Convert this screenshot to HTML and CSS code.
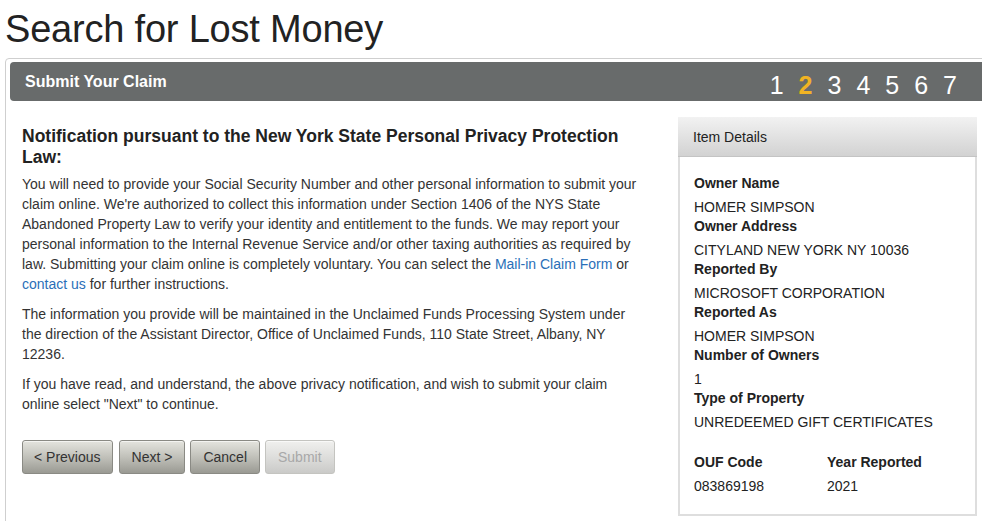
FILE: index.html
```html
<!DOCTYPE html>
<html>
<head>
<meta charset="utf-8">
<title>Search for Lost Money</title>
<link rel="stylesheet" href="styles.css">
</head>
<body>
<h1 class="page-title">Search for Lost Money</h1>
<div class="wizard">
  <div class="wizard-bar">
    <span class="wizard-title">Submit Your Claim</span>
    <ol class="steps">
      <li>1</li>
      <li class="current">2</li>
      <li>3</li>
      <li>4</li>
      <li>5</li>
      <li>6</li>
      <li>7</li>
    </ol>
  </div>
  <div class="wizard-body">
    <div class="main-col">
      <h2 class="notice-title">Notification pursuant to the New York State Personal Privacy Protection Law:</h2>
      <p>You will need to provide your Social Security Number and other personal information to submit your claim online. We're authorized to collect this information under Section 1406 of the NYS State Abandoned Property Law to verify your identity and entitlement to the funds. We may report your personal information to the Internal Revenue Service and/or other taxing authorities as required by law. Submitting your claim online is completely voluntary. You can select the <a href="#">Mail-in Claim Form</a> or <a href="#">contact us</a> for further instructions.</p>
      <p>The information you provide will be maintained in the Unclaimed Funds Processing System under the direction of the Assistant Director, Office of Unclaimed Funds, 110 State Street, Albany, NY 12236.</p>
      <p>If you have read, and understand, the above privacy notification, and wish to submit your claim online select "Next" to continue.</p>
      <div class="actions">
        <button class="btn btn-wide">&lt; Previous</button>
        <button class="btn">Next &gt;</button>
        <button class="btn">Cancel</button>
        <button class="btn" disabled>Submit</button>
      </div>
    </div>
    <aside class="details">
      <div class="details-head">Item Details</div>
      <div class="details-body">
        <dl class="field"><dt>Owner Name</dt><dd>HOMER SIMPSON</dd></dl>
        <dl class="field"><dt>Owner Address</dt><dd>CITYLAND NEW YORK NY 10036</dd></dl>
        <dl class="field"><dt>Reported By</dt><dd>MICROSOFT CORPORATION</dd></dl>
        <dl class="field"><dt>Reported As</dt><dd>HOMER SIMPSON</dd></dl>
        <dl class="field"><dt>Number of Owners</dt><dd>1</dd></dl>
        <dl class="field"><dt>Type of Property</dt><dd>UNREDEEMED GIFT CERTIFICATES</dd></dl>
        <div class="field-row">
          <dl class="field"><dt>OUF Code</dt><dd>083869198</dd></dl>
          <dl class="field"><dt>Year Reported</dt><dd>2021</dd></dl>
        </div>
      </div>
    </aside>
  </div>
</div>
</body>
</html>
```
FILE: styles.css
```css
html, body {
  margin: 0;
  padding: 0;
  background: #fff;
  overflow: hidden;
}
body {
  font-family: "Liberation Sans", Arial, Helvetica, sans-serif;
  color: #222;
  width: 982px;
  height: 521px;
}
.page-title {
  margin: 0;
  padding: 6px 0 0 5px;
  font-size: 38px;
  font-weight: normal;
  line-height: 46px;
  color: #222;
  letter-spacing: -0.2px;
  height: 52px;
}
.wizard {
  margin-left: 5px;
  width: 992px;
  box-sizing: border-box;
  border: 1px solid #cfcfcf;
  border-radius: 4px 0 0 0;
  padding: 3px 4px 0 4px;
  height: 480px;
}
.wizard-bar {
  display: flex;
  align-items: center;
  justify-content: space-between;
  height: 39px;
  background: #686b6b;
  border-radius: 4px;
  padding: 0 35px 0 15px;
}
.wizard-title {
  color: #fff;
  font-weight: bold;
  font-size: 16px;
}
.steps {
  list-style: none;
  margin: 8px 0 0 0;
  padding: 0;
  display: flex;
  gap: 15px;
  font-size: 25px;
  color: #fff;
}
.steps li.current {
  color: #f0b323;
  font-weight: bold;
}
.wizard-body {
  display: flex;
  align-items: flex-start;
  padding: 16px 0 0 12px;
}
.main-col {
  width: 620px;
  margin-right: 36px;
}
.notice-title {
  margin: 9px 0 6px 0;
  font-size: 17.5px;
  font-weight: bold;
  line-height: 21px;
  color: #222;
}
.main-col p {
  margin: 0 0 10px 0;
  font-size: 14px;
  line-height: 20px;
  color: #333;
}
.main-col a {
  color: #2a6fb8;
  text-decoration: none;
}
.actions {
  display: flex;
  gap: 5px;
  margin-top: 26px;
}
.btn {
  height: 34px;
  padding: 0 12px;
  font-family: "Liberation Sans", Arial, sans-serif;
  font-size: 14px;
  color: #333;
  border: 1px solid #8a8a84;
  border-radius: 3px;
  background: linear-gradient(#e4e4de, #bdbdb6 55%, #9a9a93);
  box-shadow: inset 0 1px 0 rgba(255,255,255,0.6);
}
.btn-wide {
  padding: 0 11px;
  margin-right: 1px;
}
.btn[disabled] {
  color: #a8a8a8;
  border-color: #c4c4c0;
  background: linear-gradient(#f0f0ee, #dcdcda 55%, #cacac8);
}
.details {
  width: 299px;
  box-sizing: border-box;
}
.details-head {
  height: 40px;
  line-height: 40px;
  padding-left: 15px;
  font-size: 14px;
  color: #222;
  background: linear-gradient(#f2f2f2, #d2d2d2);
  border-bottom: 1px solid #c4c4c4;
  box-sizing: border-box;
}
.details-body {
  border: 2px solid #dedede;
  border-top: none;
  padding: 17px 14px 18px 14px;
}
.field {
  margin: 0;
  font-size: 14px;
}
.field dt {
  font-weight: bold;
  line-height: 19px;
  color: #222;
}
.field dd {
  margin: 5px 0 0 0;
  line-height: 19px;
  color: #222;
}
.field-row {
  display: grid;
  grid-template-columns: 133px 1fr;
  margin-top: 21px;
}
```
